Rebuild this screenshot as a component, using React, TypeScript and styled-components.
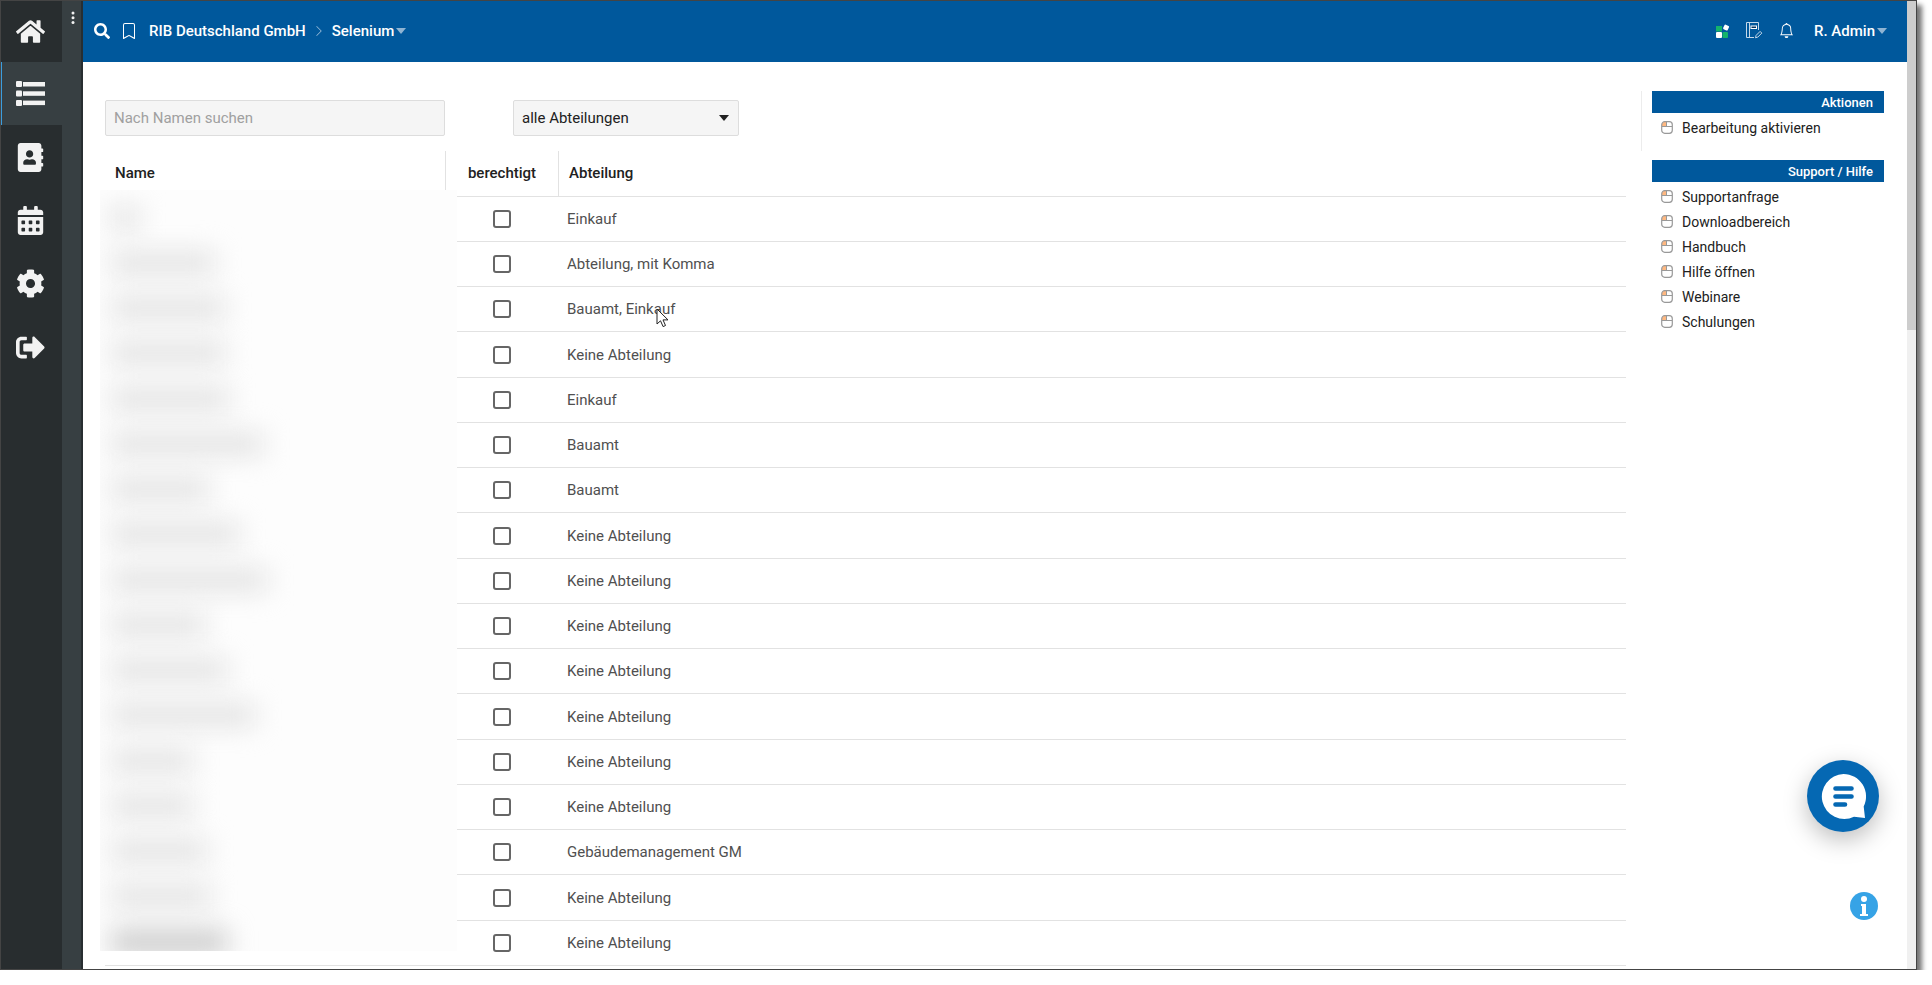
import React from "react";
import styled, { createGlobalStyle } from "styled-components";
import {
  FaHome,
  FaAddressBook,
  FaCalendarAlt,
  FaCog,
  FaSignOutAlt,
  FaSearch,
} from "react-icons/fa";
import { BsBell, BsBookmark, BsChevronRight } from "react-icons/bs";

const GlobalStyle = createGlobalStyle`
  *, *::before, *::after { box-sizing: border-box; }
  body {
    margin: 0;
    background: #fff;
    color: #212121;
    font-family: Roboto, "Liberation Sans", sans-serif;
    font-size: 15px;
    line-height: 20px;
  }
  button, input, select { font: inherit; color: inherit; }
  button { border: 0; padding: 0; background: none; cursor: pointer; }
  a { color: inherit; text-decoration: none; }
  svg { display: block; flex: none; }
`;

const Frame = styled.div`
  position: relative;
  display: flex;
  height: calc(100vh - 15px);
  margin: 0 15px 0 0;
  border: 1px solid #444;
  background: #fff;
  box-shadow: 5px 5px 5px rgba(0, 0, 0, 0.55);
  overflow: hidden;
`;

const Rail = styled.nav`
  flex: none;
  width: 61px;
  background: #282d2f;
`;

const RailList = styled.ul`
  display: grid;
  grid-template-rows: 61px repeat(5, 1fr);
  height: 378px;
  margin: 0;
  padding: 0;
  list-style: none;
`;

const RailLink = styled.a<{ $active?: boolean }>`
  display: flex;
  align-items: center;
  justify-content: center;
  height: 100%;
  padding-right: 2px;
  color: #f2f2f2;
  background: ${(p) => (p.$active ? "#373f42" : "transparent")};
  box-shadow: ${(p) => (p.$active ? "inset 1px 0 0 #3b9ddd" : "none")};
`;

const Grip = styled.div`
  display: flex;
  flex: none;
  justify-content: center;
  width: 21px;
  padding-top: 10px;
  background: #373f42;
  border-right: 2px solid #282e31;
`;

const GripButton = styled.button`
  width: 19px;
  height: 15px;
  display: flex;
  justify-content: flex-end;
  padding-right: 6px;
  color: #f2f2f2;
`;

const Main = styled.div`
  display: flex;
  flex: 1;
  flex-direction: column;
  min-width: 0;
`;

const TopBar = styled.header`
  display: flex;
  flex: none;
  align-items: center;
  justify-content: space-between;
  height: 61px;
  padding: 0 20px 2px 11px;
  color: #fff;
  background: #00589c;
`;

const BarGroup = styled.div<{ $gap: number }>`
  display: flex;
  align-items: center;
  gap: ${(p) => p.$gap}px;
`;

const Crumb = styled.button`
  display: flex;
  align-items: center;
  gap: 2px;
  font-weight: 500;
`;

const IconButton = styled.button`
  display: flex;
  color: #fff;
`;

const Body = styled.div`
  display: flex;
  flex: 1;
  align-items: flex-start;
  min-height: 0;
  padding: 29px 23px 0 22px;
  overflow: hidden;
`;

const Content = styled.main`
  flex: 1;
  min-width: 0;
  padding-top: 9px;
`;

const Filters = styled.form`
  display: flex;
  gap: 68px;
`;

const SearchInput = styled.input`
  width: 340px;
  height: 36px;
  padding: 0 8px;
  border: 1px solid #ddd;
  border-radius: 2px;
  background: #f5f5f5;
  &::placeholder { color: #a0a0a0; opacity: 1; }
`;

const SelectWrap = styled.div`
  display: grid;
  align-items: center;
  width: 226px;
  > * { grid-area: 1 / 1; }
  > svg { justify-self: end; margin-right: 10px; pointer-events: none; }
`;

const DepartmentSelect = styled.select`
  appearance: none;
  width: 100%;
  height: 36px;
  padding: 0 8px;
  border: 1px solid #ddd;
  border-radius: 2px;
  background: #f5f5f5;
`;

const TableArea = styled.div`
  position: relative;
  margin-top: 15px;
`;

const Table = styled.table`
  width: 100%;
  table-layout: fixed;
  border-collapse: separate;
  border-spacing: 0;
  col:nth-child(1) { width: 341px; }
  col:nth-child(2) { width: 113px; }
`;

const HeadCell = styled.th`
  height: 46px;
  padding: 0 0 2px 10px;
  border-bottom: 1px solid #e2e2e2;
  font-weight: 500;
  text-align: left;
  &:not(:last-child) { border-right: 1px solid #e2e2e2; }
  &:nth-child(2) { padding: 0 0 2px; text-align: center; }
`;

const Row = styled.tr`
  height: 45px;
  &:nth-child(4n) { height: 46px; }
`;

const Cell = styled.td<{ $center?: boolean }>`
  padding: ${(p) => (p.$center ? "0 2px 0 0" : "0 0 0 8px")};
  border-bottom: 1px solid #e2e2e2;
  color: #505050;
  text-align: ${(p) => (p.$center ? "center" : "left")};
`;

const CheckBox = styled.input`
  appearance: none;
  display: block;
  width: 18px;
  height: 18px;
  margin: 0 auto;
  border: 2px solid #666;
  border-radius: 3px;
  background: #fff;
`;

const Redaction = styled.div`
  position: absolute;
  top: 39px;
  left: -5px;
  width: 357px;
  height: 761px;
  padding-top: 6px;
  background: #fdfdfd;
  overflow: hidden;
`;

const RedactedName = styled.div<{ $strong?: boolean }>`
  height: 45px;
  padding: 10px 0 0 10px;
  &:nth-child(4n) { height: 46px; }
  &::before {
    content: "";
    display: block;
    height: 24px;
    background: ${(p) => (p.$strong ? "#cacaca" : "#e4e4e4")};
    filter: blur(13px);
  }
`;

const Side = styled.aside`
  flex: none;
  width: 258px;
  padding-left: 15px;
`;

const Section = styled.section<{ $divided?: boolean }>`
  min-height: 60px;
  margin-bottom: 9px;
  padding-left: 10px;
  border-left: 1px solid ${(p) => (p.$divided ? "#ececec" : "transparent")};
`;

const SectionTitle = styled.h2`
  margin: 0 0 2px;
  padding: 2px 11px 0;
  color: #fff;
  background: #00589c;
  font-size: 13px;
  font-weight: 500;
  line-height: 20px;
  text-align: right;
`;

const ActionLink = styled.a`
  display: flex;
  align-items: center;
  gap: 9px;
  height: 25px;
  padding-left: 9px;
  font-size: 14px;
`;

const ScrollTrack = styled.div`
  flex: none;
  width: 9px;
  background: #f0f0f0;
`;

const ScrollThumb = styled.div`
  height: 34%;
  background: #cdcdcd;
`;

const ChatButton = styled.button`
  position: absolute;
  right: 37px;
  bottom: 137px;
  display: flex;
  width: 72px;
  height: 72px;
  border-radius: 50%;
  background: #0568b3;
  box-shadow: 0 8px 24px rgba(0, 0, 0, 0.26);
`;

const InfoButton = styled.button`
  position: absolute;
  right: 38px;
  bottom: 49px;
`;

const Pointer = styled.svg`
  position: absolute;
  top: 157px;
  left: 551px;
`;

function Caret({ color }: { color: string }) {
  return (
    <svg width="10" height="6" viewBox="0 0 10 6">
      <path d="M0 0h10L5 6z" fill={color} />
    </svg>
  );
}

function ListIcon() {
  return (
    <svg width="29" height="25" viewBox="0 0 29 25" fill="currentColor">
      <rect width="6" height="6" rx="1" />
      <rect y="9.5" width="6" height="6" rx="1" />
      <rect y="19" width="6" height="6" rx="1" />
      <rect x="7" y="1" width="22" height="4.5" />
      <rect x="7" y="10.3" width="22" height="4.5" />
      <rect x="7" y="19.6" width="22" height="4.5" />
    </svg>
  );
}

function AppsIcon() {
  return (
    <svg width="14" height="14" viewBox="0 0 14 14">
      <rect y="2" width="6" height="5.5" fill="#14b36b" />
      <rect y="8" width="6" height="6" rx="1" fill="#fff" />
      <rect x="6.5" y="8" width="5.5" height="6" rx="1" fill="#14b36b" />
      <rect x="7.6" y="1" width="5" height="5" rx="1" fill="#fff" transform="rotate(25 10 3.5)" />
    </svg>
  );
}

function JournalIcon() {
  return (
    <svg width="17" height="17" viewBox="0 0 17 17" fill="none" stroke="#c4d8e9">
      <path d="M8 15.5H.5V.5h12V8M3.5 .5v15" />
      <rect x="5" y="4" width="5.5" height="2.5" stroke="#fff" fill="#033560" />
      <path d="M9.5 15.8l.6-2.4 4-4 1.7 1.7-4 4z" />
    </svg>
  );
}

function MouseIcon() {
  return (
    <svg width="12" height="13" viewBox="0 0 12 13" fill="none">
      <path d="M1 5.5V3Q1 1 3 1H5.5V5.5z" fill="#ffb880" />
      <rect x=".7" y=".7" width="10.6" height="11.6" rx="3" stroke="#999" strokeWidth="1.2" />
      <path d="M1 5.5h10M5.5 1v4.5" stroke="#999" />
    </svg>
  );
}

const navItems = [
  { label: "Startseite", icon: <FaHome size={29} /> },
  { label: "Liste", icon: <ListIcon />, active: true },
  { label: "Kontakte", icon: <FaAddressBook size={29} /> },
  { label: "Kalender", icon: <FaCalendarAlt size={29} /> },
  { label: "Einstellungen", icon: <FaCog size={29} /> },
  { label: "Abmelden", icon: <FaSignOutAlt size={29} /> },
];

const rows = [
  { department: "Einkauf", nameWidth: 30 },
  { department: "Abteilung, mit Komma", nameWidth: 106 },
  { department: "Bauamt, Einkauf", nameWidth: 116 },
  { department: "Keine Abteilung", nameWidth: 116 },
  { department: "Einkauf", nameWidth: 120 },
  { department: "Bauamt", nameWidth: 154 },
  { department: "Bauamt", nameWidth: 100 },
  { department: "Keine Abteilung", nameWidth: 130 },
  { department: "Keine Abteilung", nameWidth: 158 },
  { department: "Keine Abteilung", nameWidth: 96 },
  { department: "Keine Abteilung", nameWidth: 118 },
  { department: "Keine Abteilung", nameWidth: 146 },
  { department: "Keine Abteilung", nameWidth: 84 },
  { department: "Keine Abteilung", nameWidth: 84 },
  { department: "Gebäudemanagement GM", nameWidth: 98 },
  { department: "Keine Abteilung", nameWidth: 102 },
  { department: "Keine Abteilung", nameWidth: 118 },
];

const supportLinks = [
  "Supportanfrage",
  "Downloadbereich",
  "Handbuch",
  "Hilfe öffnen",
  "Webinare",
  "Schulungen",
];

export default function App() {
  return (
    <>
      <GlobalStyle />
      <Frame>
        <Rail aria-label="Hauptnavigation">
          <RailList>
            {navItems.map((item) => (
              <li key={item.label}>
                <RailLink href="#" aria-label={item.label} $active={item.active}>
                  {item.icon}
                </RailLink>
              </li>
            ))}
          </RailList>
        </Rail>
        <Grip>
          <GripButton aria-label="Menü">
            <svg width="4" height="13" viewBox="0 0 4 13" fill="currentColor">
              <circle cx="2" cy="2" r="1.5" />
              <circle cx="2" cy="6.8" r="1.5" />
              <circle cx="2" cy="11.5" r="1.5" />
            </svg>
          </GripButton>
        </Grip>
        <Main>
          <TopBar>
            <BarGroup $gap={12}>
              <BarGroup $gap={11}>
                <IconButton aria-label="Suche"><FaSearch size={16} /></IconButton>
                <IconButton aria-label="Lesezeichen"><BsBookmark size={16} /></IconButton>
              </BarGroup>
              <BarGroup $gap={7}>
                <Crumb>RIB Deutschland GmbH</Crumb>
                <BsChevronRight size={12} color="#9fc0dc" />
                <Crumb>Selenium <Caret color="#8fb4d3" /></Crumb>
              </BarGroup>
            </BarGroup>
            <BarGroup $gap={20}>
              <BarGroup $gap={16}>
                <IconButton aria-label="Anwendungen"><AppsIcon /></IconButton>
                <IconButton aria-label="Notizen"><JournalIcon /></IconButton>
                <IconButton aria-label="Benachrichtigungen"><BsBell size={15} /></IconButton>
              </BarGroup>
              <Crumb>R. Admin <Caret color="#8fb4d3" /></Crumb>
            </BarGroup>
          </TopBar>
          <Body>
            <Content>
              <Filters>
                <SearchInput aria-label="Nach Namen suchen" placeholder="Nach Namen suchen" />
                <SelectWrap>
                  <DepartmentSelect aria-label="Abteilung">
                    <option>alle Abteilungen</option>
                    <option>Einkauf</option>
                    <option>Bauamt</option>
                  </DepartmentSelect>
                  <Caret color="#212121" />
                </SelectWrap>
              </Filters>
              <TableArea>
                <Table>
                  <colgroup><col /><col /><col /></colgroup>
                  <thead>
                    <tr>
                      <HeadCell>Name</HeadCell>
                      <HeadCell>berechtigt</HeadCell>
                      <HeadCell>Abteilung</HeadCell>
                    </tr>
                  </thead>
                  <tbody>
                    {rows.map((row, i) => (
                      <Row key={i}>
                        <Cell />
                        <Cell $center>
                          <CheckBox type="checkbox" aria-label={`berechtigt, Zeile ${i + 1}`} />
                        </Cell>
                        <Cell>{row.department}</Cell>
                      </Row>
                    ))}
                  </tbody>
                </Table>
                <Redaction aria-hidden="true">
                  {rows.map((row, i) => (
                    <RedactedName
                      key={i}
                      $strong={i === rows.length - 1}
                      style={{ width: row.nameWidth + 10 }}
                    />
                  ))}
                </Redaction>
                <Pointer width="13" height="20" viewBox="0 0 13 20">
                  <path
                    d="M1 1v15l3.5-3.2 2.6 5.8 2.4-1.1-2.5-5.6H12z"
                    fill="#fff"
                    stroke="#222"
                  />
                </Pointer>
              </TableArea>
            </Content>
            <Side>
              <Section $divided>
                <SectionTitle>Aktionen</SectionTitle>
                <ActionLink href="#"><MouseIcon />Bearbeitung aktivieren</ActionLink>
              </Section>
              <Section>
                <SectionTitle>Support / Hilfe</SectionTitle>
                {supportLinks.map((label) => (
                  <ActionLink href="#" key={label}><MouseIcon />{label}</ActionLink>
                ))}
              </Section>
            </Side>
          </Body>
        </Main>
        <ScrollTrack><ScrollThumb /></ScrollTrack>
        <ChatButton aria-label="Chat öffnen">
          <svg width="72" height="72" viewBox="0 0 72 72">
            <path
              d="M36.5 14a22.5 22.5 0 0 1 20.2 32.5L58 58l-11-1.2A22.5 22.5 0 1 1 36.5 14z"
              fill="#fff"
            />
            <path
              d="M28.5 28.5h16M28.5 36.5h16M28.5 44.5h9.5"
              stroke="#0568b3"
              strokeWidth="4.6"
              strokeLinecap="round"
            />
          </svg>
        </ChatButton>
        <InfoButton aria-label="Information">
          <svg width="28" height="28" viewBox="0 0 28 28">
            <circle cx="14" cy="14" r="14" fill="#36a3e6" />
            <circle cx="14" cy="7" r="3" fill="#fff" />
            <path d="M11 12h5v10h2v2h-8v-2h2v-8h-1z" fill="#fff" />
          </svg>
        </InfoButton>
      </Frame>
    </>
  );
}
